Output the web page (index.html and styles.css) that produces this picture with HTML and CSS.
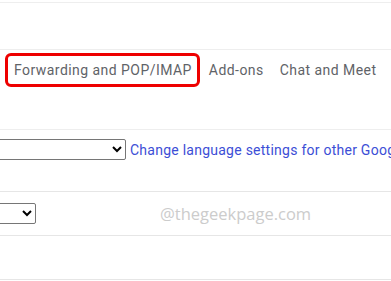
FILE: index.html
```html
<!DOCTYPE html>
<html>

<head>
  <meta charset="utf-8">
  <meta name="viewport" content="width=device-width">
  <title>settings</title>

  <link rel="stylesheet" href="styles.css">
</head>

<body>
  <div class="top-row"></div>

  <nav class="tabs">
    <a class="tab active">Forwarding and POP/IMAP</a>
    <a class="tab">Add-ons</a>
    <a class="tab">Chat and Meet</a>
  </nav>

  <section class="row lang">
    <select class="wide-select">
      <option></option>
    </select>
    <a class="link">Change language settings for other Google products</a>
  </section>

  <section class="row small">
    <select class="short-select">
      <option></option>
    </select>
    <span class="watermark">@thegeekpage.com</span>
  </section>

  <section class="row empty"></section>
</body>

</html>
```
FILE: styles.css
```css
* {
  box-sizing: border-box;
}

body {
  margin: 0;
  background-color: white;
  font-family: Roboto, "Liberation Sans", sans-serif;
  overflow: hidden;
}

.top-row {
  height: 3px;
  border-bottom: 1px solid #eeeeee;
  margin-bottom: 46px;
}

.tabs {
  display: flex;
  align-items: center;
  height: 81px;
  padding: 0 0 0 5px;
  border-top: 1px solid #eeeeee;
  border-bottom: 1px solid #eeeeee;
  padding-bottom: 40px;
}

.tab {
  color: #5f6368;
  font-size: 14px;
  letter-spacing: 0.45px;
  padding: 6px 5px;
  white-space: nowrap;
  border: 3px solid transparent;
  border-radius: 6px;
}

.tab.active {
  border-color: #ee0000;
  padding-left: 6px;
  padding-right: 5px;
  margin-right: 1px;
}

.row {
  display: flex;
  align-items: center;
  border-bottom: 1px solid #e6e6e6;
  white-space: nowrap;
}

.lang {
  height: 62px;
  padding-bottom: 22px;
  gap: 4px;
}

.small {
  height: 44px;
}

.empty {
  height: 44px;
}

select {
  flex-shrink: 0;
  height: 21px;
  border: 1px solid #767676;
  border-radius: 2px;
  background-color: white;
}

.wide-select {
  width: 160px;
  margin-left: -34px;
}

.short-select {
  width: 70px;
  margin-left: -34px;
}

.link {
  color: #3c4ed6;
  font-size: 14px;
  letter-spacing: 0.25px;
}

.watermark {
  margin-left: 124px;
  color: #cccccc;
  font-family: "Open Sans", sans-serif;
  font-size: 16.5px;
}
```
